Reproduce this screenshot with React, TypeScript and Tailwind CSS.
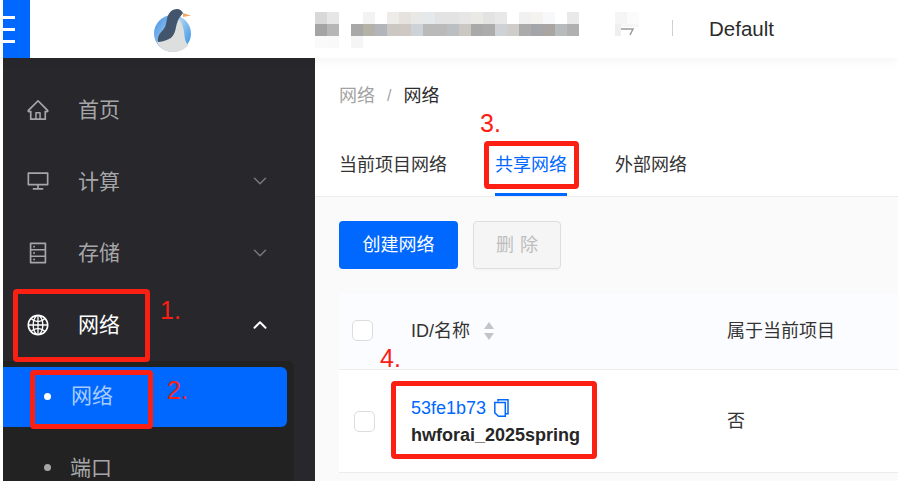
import { AiOutlineDatabase, AiOutlineDesktop, AiOutlineGlobal, AiOutlineHome } from "react-icons/ai";
import { ChevronDown, ChevronUp } from "lucide-react";
import type { ReactNode } from "react";

// mosaic over the blurred account name, 12px cells
const blurTop = ["#d8d8d8", "#e6e6e6", "", "", "#f3f3f3", "", "#eeece9", "#e6e3df", "#e8e8e6", "#e6e9eb", "#e3e3e3", "#e3e3e3", "#e6e6e6", "#ebe9e6", "#e3e3e3", "#e8e8e8", "", "#f1f1f1", "#f5f3f0", "#f7f8fa", "", "#e9e9e9"];
const blurMid = ["#a4a4a4", "#b6b6b6", "", "#a8a8a8", "#b4b1a6", "#b2b6bb", "#cbc8c3", "#cdc8c3", "#ccd2d6", "#bababa", "#bababa", "#bcbfc1", "#cbc8c3", "#a9a9a9", "#acacac", "#ced2d6", "#cfcdc9", "#ababab", "#a3a5a8", "#a8a5a2", "#b8bbbb", "#b0b0b0"];
const blurLow = ["#fafafa", "#f9f9f9", "", "#f5f5f5"];

function BlurRow({ cells }: { cells: string[] }) {
  return (
    <div className="flex h-3">
      {cells.map((color, i) => (
        <div key={i} className="h-3 w-3" style={{ backgroundColor: color || "transparent" }} />
      ))}
    </div>
  );
}

function MenuItem({ icon, label, arrow, active }: { icon: ReactNode; label: string; arrow?: "up" | "down"; active?: boolean }) {
  return (
    <div className={`flex h-[71.6px] items-center pl-[22.5px] pr-[44.5px] ${active ? "text-white" : "text-[#a6a6a8]"}`}>
      <span className="flex w-[52.5px] text-[24px]">{icon}</span>
      <span className="flex-1 text-[21px] leading-none">{label}</span>
      {arrow === "down" && <ChevronDown size={22} strokeWidth={1.7} className="text-[#77777a]" />}
      {arrow === "up" && <ChevronUp size={22} strokeWidth={2.2} className="text-white" />}
    </div>
  );
}

function Note({ className, children }: { className: string; children: ReactNode }) {
  return <div className={`absolute text-[25px] leading-none text-[#fb2013] ${className}`}>{children}</div>;
}

function RedBox({ className }: { className: string }) {
  return <div className={`absolute rounded-[4px] border-[5px] border-[#fb2013] ${className}`} />;
}

function Checkbox() {
  return <div className="h-[21px] w-[21px] rounded-[5px] border border-[#dcdcdc] bg-white" />;
}

export default function App() {
  return (
    <div className="relative h-[481px] w-[898px] overflow-hidden bg-white font-['Liberation_Sans','Noto_Sans_CJK_SC',sans-serif]">
      {/* header */}
      <header className="relative z-10 ml-[3px] flex h-[58px] items-center bg-white shadow-[0_2px_12px_rgba(0,0,0,0.05)]">
        <div className="flex h-full w-[27px] flex-col justify-center gap-[9px] bg-[#0068ff]">
          <div className="h-[3px] w-3 bg-white" />
          <div className="h-[3px] w-3 bg-white" />
          <div className="h-[3px] w-3 bg-white" />
        </div>
        <div className="flex w-[285px] pl-[120px] pt-[4px]">
          <svg width="44" height="48" viewBox="0 0 44 48">
            <defs>
              <linearGradient id="sky" x1="0" y1="0" x2="1" y2="0.6">
                <stop offset="0" stopColor="#3f8fe0" />
                <stop offset="0.6" stopColor="#a5cff2" />
                <stop offset="1" stopColor="#4f9fe8" />
              </linearGradient>
            </defs>
            <circle cx="22.5" cy="26.5" r="18.5" fill="url(#sky)" />
            <path d="M29 12c5 6 5 14 6 20 .5 3 2 5 3.500 6-3 4-9 7-15.500 7-7 0-13-3.500-16-10 6-2 14-8 22-23z" fill="#dddfde" />
            <path d="M8 35c-1-5 2-9 5-12 3-3 3-7 4-11 1-6 5-10 10-10 3 0 5 2 6 4l-3 4c-2 2-3 6-4 10-1 6-3 10-7 12-4 2-8 3-11 3z" fill="#43556c" />
            <path d="M33 6l8 2.500-8 1.500z" fill="#f2a868" />
          </svg>
        </div>
        <div className="mt-3 flex h-9 flex-col self-start">
          <BlurRow cells={blurTop} />
          <BlurRow cells={blurMid} />
          <BlurRow cells={blurLow} />
        </div>
        <div className="ml-9 mt-3 flex h-9 w-6 flex-col self-start">
          <div className="flex h-3">
            <div className="h-3 w-3 bg-[#f5f5f5]" />
            <div className="h-3 w-3 bg-[#fbfbfb]" />
          </div>
          <div className="flex h-3">
            <div className="h-3 w-[6px] bg-[#efefef]" />
            <div className="flex flex-col">
              <div className="h-[3px] w-[18px] bg-[#f6f6f6]" />
              <svg width="14" height="9" viewBox="0 0 14 9">
                <path d="M0 2h12l-3 6" fill="none" stroke="#9a9a9a" strokeWidth="1.500" />
              </svg>
            </div>
          </div>
        </div>
        <div className="ml-[33px] mt-[-2px] h-4 w-px bg-[#d0d0d0]" />
        <span className="ml-9 text-[20.5px] leading-none text-[#2b2b2b]">Default</span>
      </header>

      <div className="flex h-[423px]">
        {/* sidebar */}
        <aside className="ml-[3px] h-full w-[312px] shrink-0 bg-[#27272c] pt-[16px]">
          <MenuItem icon={<AiOutlineHome />} label="首页" />
          <MenuItem icon={<AiOutlineDesktop />} label="计算" arrow="down" />
          <MenuItem icon={<AiOutlineDatabase />} label="存储" arrow="down" />
          <MenuItem icon={<AiOutlineGlobal />} label="网络" arrow="up" active />
          <div className="mt-[0.6px] h-full w-[291px] rounded-tr-[6px] bg-[#222222] pt-[6px]">
            <div className="flex h-[60px] w-[284px] items-center rounded-r-[6px] bg-[#0068ff] pl-[41px]">
              <div className="h-[7px] w-[7px] rounded-full bg-white" />
              <span className="mb-[2px] ml-[20px] text-[21px] leading-none text-[#a8ccff]">网络</span>
            </div>
            <div className="flex h-[72px] items-center pl-[41px] pt-[9px]">
              <div className="h-[7px] w-[7px] rounded-full bg-[#a6a6a8]" />
              <span className="ml-[19px] text-[21px] leading-none text-[#a6a6a8]">端口</span>
            </div>
          </div>
        </aside>

        {/* main */}
        <main className="flex-1 bg-[#fafafa]">
          <div className="h-[139px] border-b border-[#ececec] bg-white pl-6">
            <div className="flex h-[75px] items-center text-[18px] leading-none">
              <span className="text-[#a3a3a3]">网络</span>
              <span className="mx-[12px] text-[16px] text-[#a3a3a3]">/</span>
              <span className="text-[#2b2b2b]">网络</span>
            </div>
            <div className="flex h-[63px] gap-12 text-[18px] leading-none text-[#333333]">
              <span className="pt-[23px]">当前项目网络</span>
              <span className="h-full border-b-[3px] border-[#0068ff] pt-[23px] text-[#0068ff]">共享网络</span>
              <span className="pt-[23px]">外部网络</span>
            </div>
          </div>

          <div className="flex gap-[15px] pl-6 pt-6">
            <div className="flex h-[48px] w-[119px] items-center justify-center rounded-[4px] bg-[#0068ff] text-[18px] leading-none text-white">创建网络</div>
            <div className="flex h-[48px] w-[88px] items-center justify-center rounded-[4px] border border-[#dedede] bg-[#f5f5f5] pl-[6px] text-[18px] leading-none tracking-[6px] text-[#bdbdbd] shadow-[0_2px_0_rgba(0,0,0,0.02)]">删除</div>
          </div>

          <div className="ml-6 mt-6 rounded-t-[6px] bg-white">
            <div className="flex h-[77px] items-center rounded-t-[6px] border-b border-[#ececec] bg-[#fbfcff] pb-[1px] pl-[13px] text-[#333333]">
              <Checkbox />
              <div className="ml-[38px] flex w-[316px] items-center text-[18px] leading-none">
                ID/名称
                <svg width="12" height="20" viewBox="0 0 12 20" className="ml-[13px]">
                  <path d="M6 1l5 7H1z M6 19l5-7H1z" fill="#c4c4c4" />
                </svg>
              </div>
              <span className="text-[18px] leading-none">属于当前项目</span>
            </div>
            <div className="flex h-[103px] items-center border-b border-[#ececec] pl-[15px] text-[#333333]">
              <Checkbox />
              <div className="ml-[36px] flex w-[316px] flex-col gap-[9px]">
                <div className="flex items-center text-[18px] leading-none text-[#0068ff]">
                  53fe1b73
                  <svg width="15" height="18" viewBox="0 0 15 18" className="ml-[8px]" fill="none" stroke="#0068ff" strokeWidth="1.500">
                    <path d="M4 2.500V.800h10v14h-2.500" />
                    <path d="M.800 3.500h10.500v13.700H4.500L.800 13.800z" />
                  </svg>
                </div>
                <span className="text-[18px] font-bold leading-none text-[#262626]">hwforai_2025spring</span>
              </div>
              <span className="text-[18px] leading-none">否</span>
            </div>
          </div>
        </main>
      </div>

      {/* red annotations */}
      <RedBox className="left-[13px] top-[289px] h-[73px] w-[137px]" />
      <RedBox className="left-[30px] top-[370px] h-[59px] w-[123px]" />
      <RedBox className="left-[484px] top-[141px] h-[48px] w-[95px]" />
      <RedBox className="left-[391px] top-[381px] h-[78px] w-[206px]" />
      <Note className="left-[160px] top-[298px]">1.</Note>
      <Note className="left-[167px] top-[378px]">2.</Note>
      <Note className="left-[480px] top-[111px]">3.</Note>
      <Note className="left-[380px] top-[346px]">4.</Note>
    </div>
  );
}
